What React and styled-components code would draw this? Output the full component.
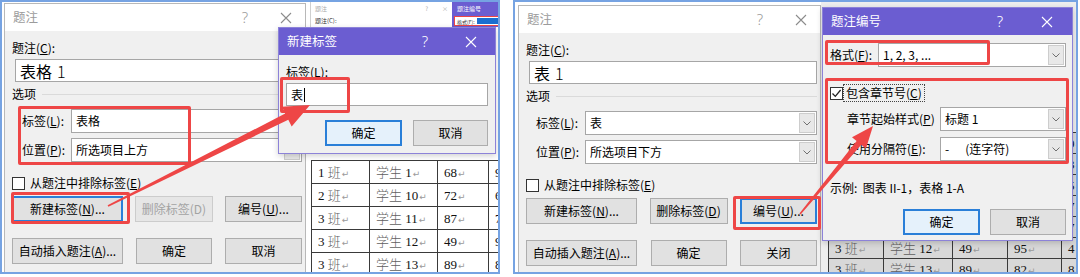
import React from 'react';
import styled, {createGlobalStyle} from 'styled-components';

const UI_FONT = `"Noto Sans CJK SC", "Noto Sans", sans-serif`;
const PURPLE = '#6b5dd1';
const RED = '#ee4646';
const FOCUS = '#2a7fd8';

const GlobalStyle = createGlobalStyle`
  html, body {
    margin: 0;
    padding: 0;
    background: #fff;
  }
  body {
    font-family: ${UI_FONT};
  }
`;

const Page = styled.div`
  position: relative;
  width: 1080px;
  height: 277px;
  display: flex;
  gap: 13px;
  font: 12px/1 ${UI_FONT};
  color: #000;
  overflow: hidden;
`;

const Shot = styled.div`
  position: relative;
  box-sizing: border-box;
  width: ${p => p.$w}px;
  height: 274px;
  border: 2px solid #76a3e2;
  display: flex;
  overflow: hidden;
  background: #fff;
`;

const Window = styled.div`
  box-sizing: border-box;
  display: flex;
  flex-direction: column;
  background: #f0f0f0;
  border: 1px solid #b8b8b8;
`;

const MainWin = styled(Window)`
  width: ${p => p.$w}px;
  margin: ${p => p.$top}px 0 0 ${p => p.$left}px;
  flex-shrink: 0;
  border-bottom: 0;
`;

const FloatWin = styled(Window)`
  position: absolute;
  left: ${p => p.$x}px;
  top: ${p => p.$y}px;
  width: ${p => p.$w}px;
  height: ${p => p.$h}px;
  border-color: #8c82d8;
  box-shadow: 0 2px 6px rgba(0, 0, 0, 0.18);
  z-index: 2;
`;

const TitleBar = styled.div`
  display: flex;
  align-items: center;
  flex-shrink: 0;
  height: 27px;
  padding-left: 8px;
  background: ${p => (p.$purple ? PURPLE : '#fff')};
  color: ${p => (p.$purple ? '#fff' : '#9b9b9b')};
  font-size: 12.5px;
`;

const TitleText = styled.span`
  flex: 1;
`;

const TitleBtn = styled.span`
  width: ${p => p.$w}px;
  height: 100%;
  display: flex;
  align-items: center;
  justify-content: center;
  font: 300 15px/1 "Noto Sans", sans-serif;
`;

const Body = styled.div`
  flex: 1;
  display: flex;
  flex-direction: column;
  padding: ${p => p.$pad};
`;

const Label = styled.div`
  height: 18px;
  line-height: 18px;
  white-space: pre;
  margin-top: ${p => p.$mt || 0}px;
`;

const TextBox = styled.div`
  box-sizing: border-box;
  display: flex;
  align-items: center;
  height: ${p => p.$h}px;
  margin: ${p => p.$mt || 0}px 0 0 ${p => p.$ml || 0}px;
  padding-left: 4px;
  background: #fff;
  border: 1px solid #a6a6a6;
  font-size: ${p => p.$fs || 12}px;
  white-space: pre;
  overflow: hidden;
`;

const Num = styled.span`
  font-weight: 300;
  margin-left: 5px;
`;

const Caret = styled.span`
  width: 1px;
  height: 14px;
  margin-left: 1px;
  background: #000;
`;

const ComboBox = styled(TextBox)`
  flex: 1;
  min-width: 0;
  padding-right: 0;
`;

const ComboText = styled.span`
  flex: 1;
`;

const DropBtn = styled.span`
  box-sizing: border-box;
  width: 16px;
  align-self: stretch;
  margin: 1px;
  display: flex;
  align-items: center;
  justify-content: center;
  background: #e8e8e8;
  border: 1px solid #cdcdcd;
`;

const Section = styled.div`
  display: flex;
  align-items: center;
  gap: 6px;
  height: 18px;
  margin-top: 3px;
  &::after {
    content: '';
    flex: 1;
    height: 1px;
    background: #dadada;
  }
`;

const Fields = styled.div`
  display: flex;
  flex-direction: column;
  gap: ${p => p.$gap}px;
  margin-top: ${p => p.$mt}px;
`;

const FieldRow = styled.div`
  display: flex;
  align-items: center;
  height: 24px;
  padding-left: ${p => p.$indent || 0}px;
`;

const FieldLabel = styled.span`
  width: ${p => p.$w}px;
  flex-shrink: 0;
  white-space: nowrap;
`;

const CheckRow = styled.div`
  display: flex;
  align-items: center;
  gap: ${p => p.$gap}px;
  height: 18px;
  margin-top: ${p => p.$mt}px;
`;

const CheckBox = styled.span`
  box-sizing: border-box;
  width: 13px;
  height: 13px;
  display: flex;
  align-items: center;
  justify-content: center;
  background: #fff;
  border: 1px solid #333;
`;

const FocusText = styled.span`
  padding: 1px 2px;
  line-height: 14px;
  border: 1px dotted #444;
`;

const BtnRow = styled.div`
  display: flex;
  justify-content: ${p => p.$justify || 'space-between'};
  gap: ${p => p.$gap || 0}px;
  margin-top: ${p => p.$mt}px;
`;

const Btn = styled.div`
  box-sizing: border-box;
  flex-shrink: 0;
  width: ${p => p.$w}px;
  height: 26px;
  display: flex;
  align-items: center;
  justify-content: center;
  background: ${p => (p.$light ? '#e5f1fb' : p.$disabled ? '#e6e6e6' : '#e1e1e1')};
  border: ${p =>
    p.$focus ? `2px solid ${FOCUS}` : `1px solid ${p.$disabled ? '#cccccc' : '#adadad'}`};
  color: ${p => (p.$disabled ? '#a3a3a3' : '#000')};
  white-space: nowrap;
`;

const RedBox = styled.div`
  position: absolute;
  box-sizing: border-box;
  left: ${p => p.$x}px;
  top: ${p => p.$y}px;
  width: ${p => p.$w}px;
  height: ${p => p.$h}px;
  border: 3px solid ${RED};
  border-radius: 2px;
  pointer-events: none;
  z-index: 3;
`;

const DocArea = styled.div`
  flex: 1;
  min-width: 0;
  display: flex;
  flex-direction: column;
  overflow: hidden;
  background: ${p => p.$bg};
`;

const Mini = styled.div`
  display: flex;
  flex-shrink: 0;
  height: 25px;
  margin-left: 4px;
`;

const MiniPane = styled.div`
  box-sizing: border-box;
  width: 142px;
  flex-shrink: 0;
  display: flex;
  flex-direction: column;
  gap: 5px;
  padding: 3px 4px;
  background: #fff;
  border-left: 1px solid #d0d0d0;
  font-size: 6px;
  line-height: 7px;
  color: #333;
`;

const MiniTitle = styled.div`
  display: flex;
  color: #aaa;
  span:first-child {
    flex: 1;
  }
  span + span {
    margin-left: 14px;
  }
`;

const MiniPurple = styled.div`
  flex: 1;
  display: flex;
  flex-direction: column;
  gap: 4px;
  padding: 3px 0 0 5px;
  background: ${PURPLE};
  color: #fff;
  font-size: 6px;
  line-height: 7px;
`;

const MiniForm = styled.div`
  display: flex;
  align-items: center;
  gap: 2px;
  height: 8px;
  margin-left: -3px;
  padding-left: 2px;
  background: #fff;
  border: 1.5px solid ${RED};
  border-right: 0;
  color: #333;
  font-size: 5px;
  &::after {
    content: '';
    flex: 1;
    height: 6px;
    background: #1a6fd0;
  }
`;

const DocTable = styled.table`
  flex-shrink: 0;
  border-collapse: collapse;
  table-layout: fixed;
  width: ${p => p.$width}px;
  margin: ${p => p.$mt}px 0 0 ${p => p.$ml}px;
  font: 13px/1 "Liberation Serif", "Noto Sans CJK SC", serif;
  color: #111;
  background: ${p => p.$bg};
  td {
    height: ${p => p.$rowH}px;
    padding: 0 0 0 6px;
    border: 1px solid #3a3a3a;
    white-space: nowrap;
    overflow: hidden;
  }
`;

const Han = styled.span`
  color: #5f5f5f;
  font-weight: 300;
`;

const Para = styled.span`
  margin-left: 1px;
  font: 9px/1 "DejaVu Sans", sans-serif;
  color: #9a9a9a;
`;

const ArrowLayer = styled.svg`
  position: absolute;
  left: 0;
  top: 0;
  width: 1080px;
  height: 277px;
  pointer-events: none;
  z-index: 5;
`;

const Mn = ({t}) => {
  const i = t.indexOf('&');
  if (i < 0) return t;
  return (
    <>
      {t.slice(0, i)}
      <u>{t[i + 1]}</u>
      {t.slice(i + 2)}
    </>
  );
};

const ChevronDown = () => (
  <svg width="8" height="5" viewBox="0 0 8 5">
    <path d="M0.5 0.5 L4 4 L7.5 0.5" fill="none" stroke="#707070" strokeWidth="1" />
  </svg>
);

const CloseIcon = ({color}) => (
  <svg width="12" height="12" viewBox="0 0 12 12">
    <path d="M1 1 L11 11 M11 1 L1 11" stroke={color} strokeWidth="1.1" />
  </svg>
);

const CheckIcon = () => (
  <svg width="11" height="11" viewBox="0 0 11 11">
    <path d="M1.5 5.5 L4.3 8.4 L9.6 2" fill="none" stroke="#222" strokeWidth="1.3" />
  </svg>
);

const Combo = ({children}) => (
  <ComboBox $h={24}>
    <ComboText>{children}</ComboText>
    <DropBtn>
      <ChevronDown />
    </DropBtn>
  </ComboBox>
);

const Title = ({text, purple, closeW}) => (
  <TitleBar $purple={purple}>
    <TitleText>{text}</TitleText>
    <TitleBtn $w={44}>?</TitleBtn>
    <TitleBtn $w={closeW}>
      <CloseIcon color={purple ? '#fff' : '#8c8c8c'} />
    </TitleBtn>
  </TitleBar>
);

const CaptionDialog = ({w, top, left, caption, label, pos, focus, delDisabled, last}) => (
  <MainWin $w={w} $top={top} $left={left}>
    <Title text="题注" closeW={38} />
    <Body $pad="8px 3px 0 7px">
      <Label>
        <Mn t="题注(&C):" />
      </Label>
      <TextBox $h={23} $fs={16} $mt={2} $ml={3}>
        {caption}
        <Num>1</Num>
      </TextBox>
      <Section>选项</Section>
      <Fields $gap={5} $mt={6}>
        <FieldRow $indent={10}>
          <FieldLabel $w={49}>
            <Mn t="标签(&L):" />
          </FieldLabel>
          <Combo>{label}</Combo>
        </FieldRow>
        <FieldRow $indent={10}>
          <FieldLabel $w={49}>
            <Mn t="位置(&P):" />
          </FieldLabel>
          <Combo>{pos}</Combo>
        </FieldRow>
      </Fields>
      <CheckRow $gap={5} $mt={12}>
        <CheckBox />
        <span>
          <Mn t="从题注中排除标签(&E)" />
        </span>
      </CheckRow>
      <BtnRow $mt={4}>
        <Btn $w={111} $focus={focus === 0}>
          <Mn t="新建标签(&N)..." />
        </Btn>
        <Btn $w={78} $disabled={delDisabled}>
          {delDisabled ? '删除标签(D)' : <Mn t="删除标签(&D)" />}
        </Btn>
        <Btn $w={77} $focus={focus === 2}>
          <Mn t="编号(&U)..." />
        </Btn>
      </BtnRow>
      <BtnRow $mt={16}>
        <Btn $w={111}>
          <Mn t="自动插入题注(&A)..." />
        </Btn>
        <Btn $w={76}>确定</Btn>
        <Btn $w={77}>{last}</Btn>
      </BtnRow>
    </Body>
  </MainWin>
);

const Cell = ({text}) => (
  <td>
    {text.split(/([\u4e00-\u9fff]+)/).map((s, i) => (i % 2 ? <Han key={i}>{s}</Han> : s))}
    <Para>↵</Para>
  </td>
);

const Table = ({cols, rows, mt, ml, bg, rowH}) => (
  <DocTable $width={cols.reduce((a, b) => a + b, 0)} $mt={mt} $ml={ml} $bg={bg} $rowH={rowH}>
    <colgroup>
      {cols.map((c, i) => (
        <col key={i} style={{width: c}} />
      ))}
    </colgroup>
    <tbody>
      {rows.map((r, i) => (
        <tr key={i}>
          {r.map((c, j) => (
            <Cell key={j} text={c} />
          ))}
        </tr>
      ))}
    </tbody>
  </DocTable>
);

const leftRows = [
  ['1 班', '学生 1', '68', '93'],
  ['2 班', '学生 10', '72', '65'],
  ['3 班', '学生 11', '87', '71'],
  ['3 班', '学生 12', '49', '95'],
  ['3 班', '学生 13', '89', '82'],
];

const rightRows = [
  ['1 班', '学生 1', '68', '93', '9'],
  ['2 班', '学生 10', '72', '65', '3'],
  ['3 班', '学生 11', '87', '71', '5'],
  ['3 班', '学生 11', '87', '71', '7'],
  ['3 班', '学生 11', '87', '71', '7'],
  ['3 班', '学生 12', '49', '95', '4'],
  ['3 班', '学生 13', '89', '82', '8'],
];

function arrowPoints(sx, sy, tx, ty, tail, shaft, head, headLen) {
  const dx = tx - sx;
  const dy = ty - sy;
  const len = Math.hypot(dx, dy);
  const ux = dx / len;
  const uy = dy / len;
  const nx = -uy;
  const ny = ux;
  const bx = tx - ux * headLen;
  const by = ty - uy * headLen;
  const pt = (x, y, w) => [x + nx * w, y + ny * w];
  const pts = [
    pt(sx, sy, tail),
    pt(bx, by, shaft),
    pt(bx, by, head),
    [tx, ty],
    pt(bx, by, -head),
    pt(bx, by, -shaft),
    pt(sx, sy, -tail),
  ];
  return pts.map(p => p.map(v => v.toFixed(1)).join(',')).join(' ');
}

const Arrows = () => (
  <ArrowLayer viewBox="0 0 1080 277">
    <polygon points={arrowPoints(108, 206, 310, 105, 0.8, 3.5, 11, 26)} fill={RED} />
    <polygon points={arrowPoints(800, 214, 873, 126, 0.8, 3, 9, 22)} fill={RED} />
  </ArrowLayer>
);

const NewLabelDialog = () => (
  <FloatWin $x={276} $y={25} $w={218} $h={127}>
    <Title text="新建标签" purple closeW={48} />
    <Body $pad="8px 7px 0 7px">
      <Label>标签(L):</Label>
      <TextBox $h={23} $mt={2}>
        表
        <Caret />
      </TextBox>
      <BtnRow $justify="flex-end" $gap={11} $mt={14}>
        <Btn $w={77} $focus $light>
          确定
        </Btn>
        <Btn $w={75}>取消</Btn>
      </BtnRow>
    </Body>
  </FloatWin>
);

const NumberingDialog = () => (
  <FloatWin $x={307} $y={5} $w={251} $h={234}>
    <Title text="题注编号" purple closeW={50} />
    <Body $pad="8px 6px 0 7px">
      <FieldRow>
        <FieldLabel $w={48}>
          <Mn t="格式(&F):" />
        </FieldLabel>
        <Combo>1, 2, 3, ...</Combo>
      </FieldRow>
      <CheckRow $gap={0} $mt={17}>
        <CheckBox>
          <CheckIcon />
        </CheckBox>
        <FocusText>
          <Mn t="包含章节号(&C)" />
        </FocusText>
      </CheckRow>
      <Fields $gap={6} $mt={5}>
        <FieldRow $indent={17}>
          <FieldLabel $w={93}>
            <Mn t="章节起始样式(&P)" />
          </FieldLabel>
          <Combo>标题 1</Combo>
        </FieldRow>
        <FieldRow $indent={17}>
          <FieldLabel $w={93}>
            <Mn t="使用分隔符(&E):" />
          </FieldLabel>
          <Combo>{'-      (连字符)'}</Combo>
        </FieldRow>
      </Fields>
      <Label $mt={18}>{'示例:  图表 II-1，表格 1-A'}</Label>
      <BtnRow $justify="flex-end" $gap={10} $mt={12}>
        <Btn $w={77} $focus $light>
          确定
        </Btn>
        <Btn $w={76}>取消</Btn>
      </BtnRow>
    </Body>
  </FloatWin>
);

export default function App() {
  return (
    <>
      <GlobalStyle />
      <Page>
        <Shot $w={500}>
          <CaptionDialog
            w={302}
            top={1}
            left={2}
            caption="表格"
            label="表格"
            pos="所选项目上方"
            focus={0}
            delDisabled
            last="取消"
          />
          <DocArea $bg="#fff">
            <Mini>
              <MiniPane>
                <MiniTitle>
                  <span>题注</span>
                  <span>?</span>
                  <span>×</span>
                </MiniTitle>
                <div>题注(C):</div>
              </MiniPane>
              <MiniPurple>
                <span>题注编号</span>
                <MiniForm>格式(F):</MiniForm>
              </MiniPurple>
            </Mini>
            <Table cols={[58, 68, 51, 40]} rows={leftRows} mt={133} ml={5} bg="#fff" rowH={22} />
          </DocArea>
          <NewLabelDialog />
          <RedBox $x={16} $y={104} $w={173} $h={59} />
          <RedBox $x={9} $y={190} $w={119} $h={32} />
          <RedBox $x={278} $y={75} $w={70} $h={36} />
        </Shot>
        <Shot $w={565}>
          <CaptionDialog
            w={303}
            top={3}
            left={3}
            caption="表"
            label="表"
            pos="所选项目下方"
            focus={2}
            last="关闭"
          />
          <DocArea $bg="#eeeeee">
            <Table
              cols={[55, 69, 55, 54, 40]}
              rows={rightRows}
              mt={130}
              ml={7}
              bg="#d8d8d8"
              rowH={20}
            />
          </DocArea>
          <NumberingDialog />
          <RedBox $x={218} $y={194} $w={88} $h={34} />
          <RedBox $x={310} $y={38} $w={165} $h={25} />
          <RedBox $x={310} $y={76} $w={244} $h={86} />
        </Shot>
        <Arrows />
      </Page>
    </>
  );
}
